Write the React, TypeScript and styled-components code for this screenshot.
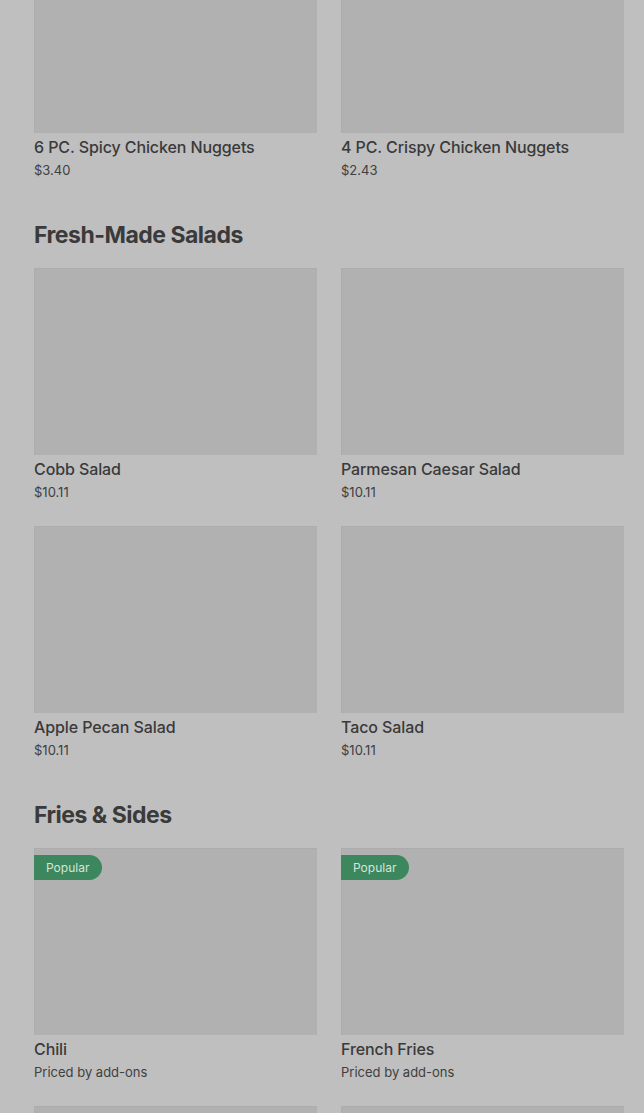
import React from 'react';
import styled, { createGlobalStyle } from 'styled-components';

const GlobalStyle = createGlobalStyle`
  html, body {
    margin: 0;
    padding: 0;
    background: #bfbfbf;
  }
  body {
    font-family: Inter, "Noto Sans", Arial, sans-serif;
    color: #3a3a3a;
  }
`;

const Viewport = styled.div`
  height: 1113px;
  overflow: hidden;
  background: #bfbfbf;
`;

const Menu = styled.div`
  margin-top: -54px;
  padding: 0 20px 0 34px;
  display: flex;
  flex-direction: column;
`;

const Section = styled.section`
  display: flex;
  flex-direction: column;
  padding-bottom: 26px;
`;

const Heading = styled.h2`
  margin: 0;
  height: 34px;
  display: flex;
  align-items: center;
  font-size: 23px;
  font-weight: 700;
  letter-spacing: -0.5px;
  color: #3a3a3a;
  padding-bottom: 16px;
`;

const Grid = styled.div`
  display: grid;
  grid-template-columns: 283px 283px;
  column-gap: 24px;
  row-gap: 12px;
`;

const Card = styled.div`
  display: flex;
  flex-direction: column;
  padding-bottom: 13px;
`;

const Photo = styled.div`
  position: relative;
  height: 187px;
  background: #b1b1b1;
  box-shadow: inset 0 1px 0 #acacac, inset 1px 0 0 #adadad;
`;

const Badge = styled.span`
  position: absolute;
  top: 7px;
  left: 0;
  height: 25px;
  padding: 0 13px 0 12px;
  display: flex;
  align-items: center;
  background: #3c875d;
  color: #d6e4db;
  font-size: 12px;
  border-radius: 0 13px 13px 0;
`;

const Title = styled.div`
  margin-top: 4px;
  font-size: 16px;
  line-height: 20px;
  font-weight: 500;
  letter-spacing: -0.1px;
  color: #3a3a3a;
  white-space: nowrap;
`;

const Price = styled.div`
  margin-top: 4px;
  font-size: 13px;
  line-height: 18px;
  color: #404040;
  white-space: nowrap;
`;

type Item = { name: string; price: string; popular?: boolean };

const sections: { title?: string; items: Item[] }[] = [
  {
    items: [
      { name: '6 PC. Spicy Chicken Nuggets', price: '$3.40' },
      { name: '4 PC. Crispy Chicken Nuggets', price: '$2.43' },
    ],
  },
  {
    title: 'Fresh-Made Salads',
    items: [
      { name: 'Cobb Salad', price: '$10.11' },
      { name: 'Parmesan Caesar Salad', price: '$10.11' },
      { name: 'Apple Pecan Salad', price: '$10.11' },
      { name: 'Taco Salad', price: '$10.11' },
    ],
  },
  {
    title: 'Fries & Sides',
    items: [
      { name: 'Chili', price: 'Priced by add-ons', popular: true },
      { name: 'French Fries', price: 'Priced by add-ons', popular: true },
      { name: 'Baked Potato', price: 'Priced by add-ons' },
      { name: 'Chili Cheese Fries', price: 'Priced by add-ons', popular: true },
    ],
  },
];

function MenuCard({ item }: { item: Item }) {
  return (
    <Card>
      <Photo>{item.popular && <Badge>Popular</Badge>}</Photo>
      <Title>{item.name}</Title>
      <Price>{item.price}</Price>
    </Card>
  );
}

export default function App() {
  return (
    <Viewport>
      <GlobalStyle />
      <Menu>
        {sections.map((s, i) => (
          <Section key={i}>
            {s.title && <Heading>{s.title}</Heading>}
            <Grid>
              {s.items.map((it) => (
                <MenuCard key={it.name} item={it} />
              ))}
            </Grid>
          </Section>
        ))}
      </Menu>
    </Viewport>
  );
}
